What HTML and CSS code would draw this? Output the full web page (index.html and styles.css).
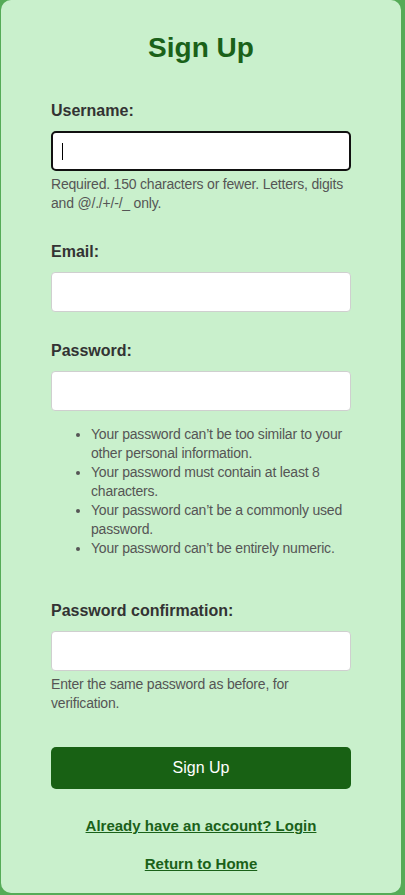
FILE: index.html
```html
<!DOCTYPE html>
<html lang="en">
<head>
<meta charset="utf-8">
<title>Sign Up</title>
<link rel="stylesheet" href="styles.css">
</head>
<body>
<main class="card">
  <h2 class="title">Sign Up</h2>
  <form class="form">
    <div class="group">
      <label class="label" for="username">Username:</label>
      <div class="field">
        <input class="input input--focus" id="username" type="text">
        <span class="caret"></span>
      </div>
      <div class="help">Required. 150 characters or fewer. Letters, digits and @/./+/-/_ only.</div>
    </div>
    <div class="group">
      <label class="label" for="email">Email:</label>
      <input class="input" id="email" type="email">
    </div>
    <div class="group">
      <label class="label" for="password1">Password:</label>
      <input class="input" id="password1" type="password">
      <ul class="rules">
        <li>Your password can’t be too similar to your other personal information.</li>
        <li>Your password must contain at least 8 characters.</li>
        <li>Your password can’t be a commonly used password.</li>
        <li>Your password can’t be entirely numeric.</li>
      </ul>
    </div>
    <div class="group">
      <label class="label" for="password2">Password confirmation:</label>
      <input class="input" id="password2" type="password">
      <div class="help">Enter the same password as before, for verification.</div>
    </div>
    <button class="button" type="button">Sign Up</button>
  </form>
  <div class="links">
    <a class="link" href="#">Already have an account? Login</a>
    <a class="link" href="#">Return to Home</a>
  </div>
</main>
</body>
</html>
```

FILE: styles.css
```css
html {
  background: #55ab57;
}

body {
  margin: 0;
  font-family: "Liberation Sans", Arial, sans-serif;
  color: #333;
}

.card {
  box-sizing: border-box;
  width: 400px;
  margin: 0 0 0 1px;
  padding: 32px 50px 21px;
  background: #c9f0cc;
  border-radius: 10px;
}

.title {
  margin: 0 0 38px;
  font-size: 28px;
  line-height: 32px;
  font-weight: bold;
  text-align: center;
  color: #1a6119;
}

.form {
  display: flex;
  flex-direction: column;
}

.group {
  margin-bottom: 30px;
}

.label {
  display: block;
  margin-bottom: 11px;
  font-size: 16px;
  line-height: 18px;
  font-weight: bold;
  color: #333;
}

.field {
  position: relative;
}

.input {
  display: block;
  box-sizing: border-box;
  width: 100%;
  height: 40px;
  margin: 0;
  padding: 10px;
  font: 16px "Liberation Sans", Arial, sans-serif;
  background: #fff;
  border: 1px solid #cfcfcf;
  border-radius: 4px;
  outline: none;
}

.input--focus {
  border: 2px solid #111;
  border-radius: 5px;
}

.caret {
  position: absolute;
  left: 11px;
  top: 12px;
  width: 1px;
  height: 17px;
  background: #000;
}

.help {
  margin-top: 4px;
  font-size: 14px;
  line-height: 19px;
  letter-spacing: -0.2px;
  color: #555;
}

.rules {
  margin: 14px 0;
  padding-left: 40px;
  font-size: 14px;
  line-height: 19px;
  letter-spacing: -0.2px;
  color: #555;
}

.button {
  margin-top: 4px;
  height: 42px;
  padding: 0;
  font: 16px "Liberation Sans", Arial, sans-serif;
  color: #fff;
  background: #186114;
  border: none;
  border-radius: 5px;
}

.links {
  display: flex;
  flex-direction: column;
  align-items: center;
  gap: 21px;
  margin-top: 28px;
}

.link {
  font-size: 15px;
  line-height: 17px;
  font-weight: bold;
  color: #1a6119;
  text-decoration: underline;
}
```
